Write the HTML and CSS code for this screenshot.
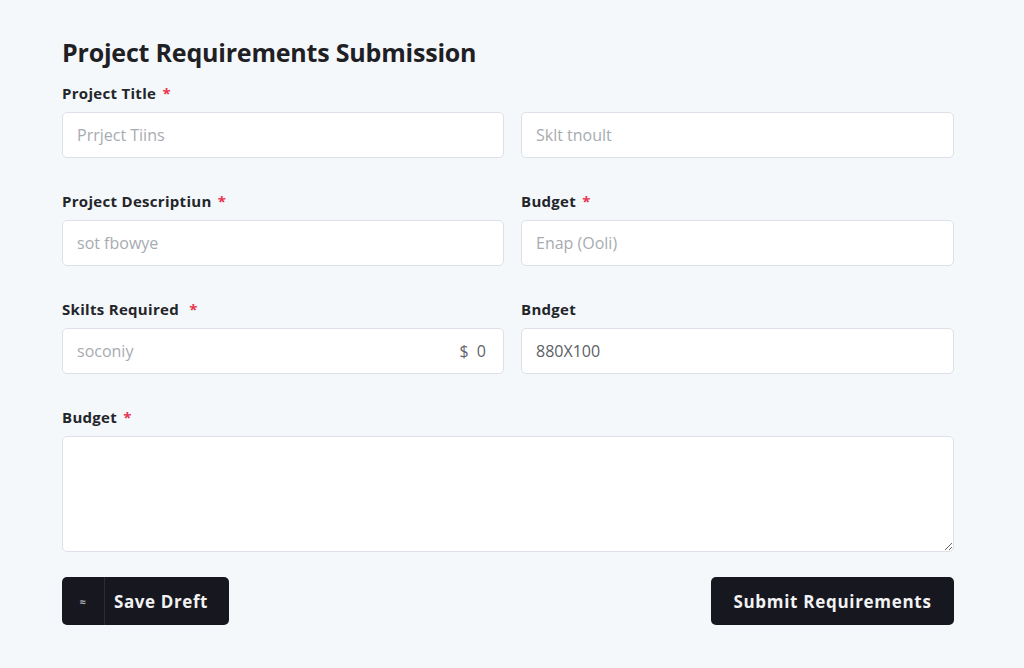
FILE: index.html
```html
<!doctype html>
<html lang="en">
    <head>
        <meta charset="UTF-8" />
        <title>Project Requirements Submission</title>
        <link rel="stylesheet" href="styles.css">
    </head>
    <body>
        <main class="page">
            <h1>Project Requirements Submission</h1>

            <form class="req-form">
                <div class="field">
                    <label for="titleInput">Project Title <span class="req">*</span></label>
                    <input type="text" id="titleInput" placeholder="Prrject Tiins" />
                </div>
                <div class="field">
                    <label class="blank">&nbsp;</label>
                    <input type="text" id="shortInput" placeholder="Sklt tnoult" />
                </div>

                <div class="field">
                    <label for="descInput">Project Descriptiun <span class="req">*</span></label>
                    <input type="text" id="descInput" placeholder="sot fbowye" />
                </div>
                <div class="field">
                    <label for="budgetInput">Budget <span class="req">*</span></label>
                    <input type="text" id="budgetInput" placeholder="Enap (Ooli)" />
                </div>

                <div class="field">
                    <label for="skillsInput">Skilts Required <span class="req spaced">*</span></label>
                    <div class="input-wrap">
                        <input type="text" id="skillsInput" placeholder="soconiy" />
                        <span class="suffix">$ 0</span>
                    </div>
                </div>
                <div class="field">
                    <label for="rangeInput">Bndget</label>
                    <input type="text" id="rangeInput" class="filled" value="880X100" />
                </div>

                <div class="field wide">
                    <label for="notesInput">Budget <span class="req">*</span></label>
                    <textarea id="notesInput"></textarea>
                </div>

                <div class="actions wide">
                    <button type="button" class="btn draft">
                        <span class="draft-icon">&#8776;</span>
                        <span class="draft-label">Save Dreft</span>
                    </button>
                    <button type="submit" class="btn submit">Submit Requirements</button>
                </div>
            </form>
        </main>
    </body>
</html>
```

FILE: styles.css
```css
body {
    margin: 0;
    font-family: "Open Sans", "Noto Sans", sans-serif;
    background-color: #f5f8fb;
    color: #1f2024;
}
.page {
    padding: 35px 0 0 62px;
}
h1 {
    margin: 0 0 14px;
    font-size: 25px;
    font-weight: 700;
    line-height: 34px;
    letter-spacing: -0.2px;
    color: #1f2024;
}
.req-form {
    display: grid;
    grid-template-columns: 442px 433px;
    column-gap: 17px;
    row-gap: 33px;
}
.field {
    display: flex;
    flex-direction: column;
}
.field label {
    font-size: 15px;
    font-weight: 700;
    line-height: 20px;
    letter-spacing: 0.3px;
    margin-bottom: 9px;
    color: #23252a;
}
.req {
    color: #e8344e;
    margin-left: 2px;
}
.req.spaced {
    margin-left: 6px;
}
.wide {
    grid-column: 1 / span 2;
}
input,
textarea {
    box-sizing: border-box;
    width: 100%;
    font-family: "Open Sans", "Noto Sans", sans-serif;
    font-size: 16px;
    color: #55585e;
    background-color: #ffffff;
    border: 1.5px solid #dde1e7;
    border-radius: 5px;
    outline: none;
}
input {
    height: 46px;
    padding: 0 14px;
}
input::placeholder {
    color: #a7abb1;
}
input.filled {
    color: #5b5e64;
}
textarea {
    height: 116px;
    padding: 10px 14px;
    resize: vertical;
}
.input-wrap {
    position: relative;
}
.suffix {
    position: absolute;
    right: 16px;
    top: 12px;
    font-size: 16px;
    color: #5f6268;
    letter-spacing: 2px;
}
.actions {
    display: flex;
    justify-content: space-between;
    margin-top: -8px;
}
.btn {
    height: 48px;
    border: none;
    border-radius: 5px;
    background-color: #17181f;
    color: #f2f2f4;
    font-family: "Open Sans", "Noto Sans", sans-serif;
    font-weight: 700;
    cursor: pointer;
}
.draft {
    display: flex;
    align-items: stretch;
    padding: 0;
    width: 167px;
    font-size: 17px;
    letter-spacing: 0.6px;
}
.draft-icon {
    display: flex;
    align-items: center;
    justify-content: center;
    width: 42px;
    font-size: 11px;
    color: #aaaab2;
    border-right: 1px solid #2a2b33;
}
.draft-label {
    display: flex;
    align-items: center;
    padding-left: 9px;
}
.submit {
    width: 243px;
    font-size: 17px;
    letter-spacing: 0.7px;
}
```
